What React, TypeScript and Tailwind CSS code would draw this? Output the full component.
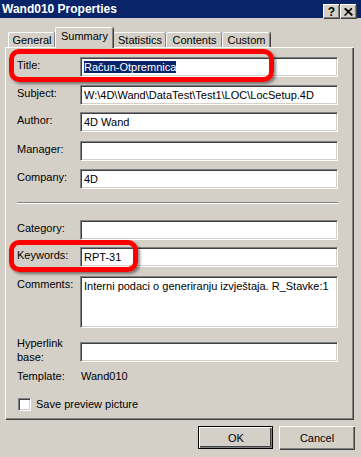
import React from "react";

const sunken =
  "bg-white border border-t-[#808080] border-l-[#808080] border-b-white border-r-white shadow-[inset_1px_1px_0_#404040,inset_-1px_-1px_0_#d4d0c8]";

function Field({ label, value, h = 20, mt, twoLine }: { label: React.ReactNode; value?: React.ReactNode; h?: number; mt: string; twoLine?: boolean }) {
  return (
    <div className={`flex items-start ${mt}`} style={{ height: h }}>
      <div className={`w-[63px] shrink-0 ${twoLine ? "-mt-[6px] leading-[14px]" : "pt-[2px] leading-[13px]"}`}>{label}</div>
      <div className={`${sunken} w-[258px] px-[3px] pt-[2px] leading-[14px] whitespace-nowrap overflow-hidden`} style={{ height: h }}>
        {value}
      </div>
    </div>
  );
}

function Tab({ label, w, selected }: { label: string; w: string; selected?: boolean }) {
  if (selected) {
    return (
      <div
        className={`${w} h-[21px] relative z-10 -mb-[1px] bg-[#d4d0c8] border-t border-l border-white rounded-tl-[2px] rounded-tr-[2px] shadow-[inset_-1px_0_0_#808080,1px_0_0_#404040] flex items-start justify-center pt-[2px] leading-[13px]`}
      >
        {label}
      </div>
    );
  }
  return (
    <div
      className={`${w} h-[15px] bg-[#d4d0c8] border-t border-l border-white rounded-tl-[2px] rounded-tr-[2px] shadow-[inset_-1px_0_0_#808080,1px_0_0_#404040] flex items-start justify-center pt-[1px] leading-[13px]`}
    >
      {label}
    </div>
  );
}

export default function App() {
  return (
    <div className="w-[361px] h-[457px] bg-[#d4d0c8] relative overflow-hidden text-[11px] text-black font-['Liberation_Sans',Arial,sans-serif]">
      {/* Title bar */}
      <div className="h-[18px] bg-[#0a246a] flex items-center justify-between pl-[2px] pr-[5px]">
        <span className="text-white font-bold text-[12px] leading-[14px]">Wand010 Properties</span>
        <div className="flex gap-[1px] mt-[4px] self-start">
          <div className="w-[16px] h-[14px] bg-[#d4d0c8] border-t border-l border-white shadow-[inset_-1px_-1px_0_#808080,1px_1px_0_#404040] flex items-center justify-center font-bold text-[12px] leading-none">?</div>
          <div className="w-[16px] h-[14px] bg-[#d4d0c8] border-t border-l border-white shadow-[inset_-1px_-1px_0_#808080,1px_1px_0_#404040] flex items-center justify-center">
            <svg width="9" height="8" viewBox="0 0 9 8">
              <path d="M0.5 0.5 L8 7.5 M1.5 0.5 L8.5 7.2 M8 0.5 L0.5 7.5 M7.5 0.5 L0.8 7.5" stroke="black" strokeWidth="1.3" fill="none" />
            </svg>
          </div>
        </div>
      </div>

      {/* Tabs */}
      <div className="mt-[9px] ml-[8px] flex items-end h-[20px]">
        <Tab label="General" w="w-[47px]" />
        <Tab label="Summary" w="w-[58px]" selected />
        <Tab label="Statistics" w="w-[53px]" />
        <Tab label="Contents" w="w-[56px]" />
        <Tab label="Custom" w="w-[48px]" />
      </div>

      {/* Panel */}
      <div className="ml-[5px] w-[348px] h-[372px] border-t border-l border-white shadow-[inset_-1px_-1px_0_#808080,1px_1px_0_#404040] pl-[11px] pt-[9px] flex flex-col">
        <Field
          label="Title:"
          mt="mt-0"
          value={<span className="bg-[#0a246a] text-white">Račun-Otpremnica</span>}
        />
        <Field label="Subject:" mt="mt-[8px]" value="W:\4D\Wand\DataTest\Test1\LOC\LocSetup.4D" />
        <Field label="Author:" mt="mt-[7px]" value="4D Wand" />
        <Field label="Manager:" mt="mt-[9px]" value="" />
        <Field label="Company:" mt="mt-[8px]" value="4D" />
        <div className="mt-[13px] w-[321px] h-[2px] border-t border-[#808080] border-b border-b-white" />
        <Field label="Category:" mt="mt-[16px]" value="" />
        <Field label="Keywords:" mt="mt-[7px]" value="RPT-31" />
        <Field label="Comments:" mt="mt-[9px]" h={52} value="Interni podaci o generiranju izvještaja. R_Stavke:1" />
        <Field label={<>Hyperlink<br />base:</>} mt="mt-[14px]" twoLine value="" />
        <div className="flex mt-[8px] leading-[13px]">
          <div className="w-[63px]">Template:</div>
          <div className="pl-[1px]">Wand010</div>
        </div>
        <div className="flex items-center mt-[15px] ml-[1px]">
          <div className={`${sunken} w-[13px] h-[13px]`} />
          <span className="ml-[5px] leading-[13px]">Save preview picture</span>
        </div>
      </div>

      {/* Buttons */}
      <div className="flex justify-end gap-[6px] pr-[7px] mt-[7px]">
        <div className="w-[75px] h-[23px] border border-black flex">
          <div className="flex-1 border-t border-l border-white shadow-[inset_-1px_-1px_0_#808080,inset_-2px_-2px_0_#404040] flex items-center justify-center">OK</div>
        </div>
        <div className="w-[75px] h-[23px] border-t border-l border-white shadow-[inset_-1px_-1px_0_#808080,1px_1px_0_#404040] flex items-center justify-center">Cancel</div>
      </div>

      {/* Red highlight boxes */}
      <div className="absolute left-[9px] top-[49px] w-[265px] h-[33px] border-[5px] border-[#ff0000] rounded-[10px] shadow-[2px_2px_3px_rgba(0,0,0,0.45)]" />
      <div className="absolute left-[9px] top-[240px] w-[129px] h-[32px] border-[5px] border-[#ff0000] rounded-[10px] shadow-[2px_2px_3px_rgba(0,0,0,0.45)]" />
    </div>
  );
}
